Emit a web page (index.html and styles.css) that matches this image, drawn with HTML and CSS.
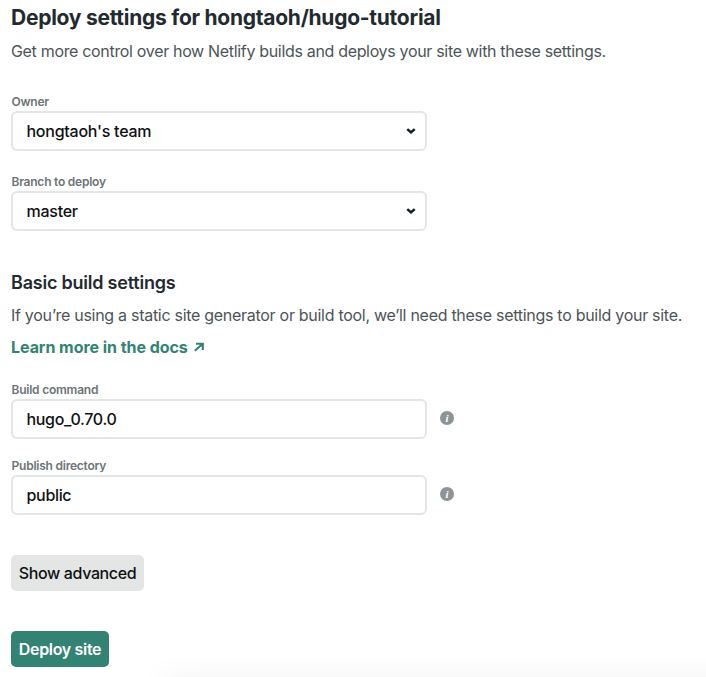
FILE: index.html
```html
<!DOCTYPE html>
<html lang="en">
<head>
<meta charset="utf-8">
<title>Deploy settings</title>
<link rel="stylesheet" href="styles.css">
</head>
<body>
<main class="page">
  <h1 class="title">Deploy settings for hongtaoh/hugo-tutorial</h1>
  <p class="text intro">Get more control over how Netlify builds and deploys your site with these settings.</p>
  <div class="field owner">
    <div class="label">Owner</div>
    <div class="control"><span>hongtaoh's team</span><svg class="chevron" viewBox="0 0 10 8"><path d="M1.3 2.1 5 5.4 8.7 2.1"/></svg></div>
  </div>
  <div class="field branch">
    <div class="label">Branch to deploy</div>
    <div class="control"><span>master</span><svg class="chevron" viewBox="0 0 10 8"><path d="M1.3 2.1 5 5.4 8.7 2.1"/></svg></div>
  </div>
  <h2 class="subtitle">Basic build settings</h2>
  <p class="text build">If you’re using a static site generator or build tool, we’ll need these settings to build your site.</p>
  <a class="docs"><span>Learn more in the docs</span><svg class="arrow" viewBox="0 0 12 12"><path d="M3 2.7H9.8V9M9.8 2.7 1.8 9.8"/></svg></a>
  <div class="field command">
    <div class="label">Build command</div>
    <div class="row"><div class="control entry">hugo_0.70.0</div><span class="info">i</span></div>
  </div>
  <div class="field directory">
    <div class="label">Publish directory</div>
    <div class="row"><div class="control entry">public</div><span class="info">i</span></div>
  </div>
  <button class="button advanced">Show advanced</button>
  <button class="button deploy">Deploy site</button>
  <div class="shade"></div>
</main>
</body>
</html>
```

FILE: styles.css
```css
* { box-sizing: border-box; margin: 0; padding: 0; }
body { background: #fff; font-family: Inter, sans-serif; color: #1f2b2f; }
.page { height: 677px; padding: 5px 11px 0; overflow: hidden; position: relative; }
.title { font-size: 21px; line-height: 26px; font-weight: 650; letter-spacing: -0.26px; white-space: nowrap; }
.text { font-size: 16px; line-height: 24px; letter-spacing: -0.325px; color: #4b5558; white-space: nowrap; }
.intro { margin-top: 8px; }
.field { width: 455px; }
.owner { margin-top: 32px; }
.label { height: 16px; padding-left: 0.5px; font-size: 12px; line-height: 14px; font-weight: 600; letter-spacing: -0.23px; color: #6b7477; }
.control { width: 416px; height: 40px; border: 2px solid #e4e5e5; border-radius: 6px; padding: 0 9px 0 13.5px; display: flex; align-items: center; justify-content: space-between; font-size: 16px; font-weight: 450; letter-spacing: -0.26px; color: #0e1111; }
.entry { letter-spacing: -0.32px; }
.branch { margin-top: 24px; }
.chevron { width: 10px; height: 8px; fill: none; stroke: #0e1e25; stroke-width: 2.5; }
.subtitle { margin-top: 40px; font-size: 18px; line-height: 24px; font-weight: 600; letter-spacing: -0.22px; }
.build { margin-top: 8px; letter-spacing: -0.285px; }
.docs { display: flex; align-items: center; gap: 5px; margin-top: 8px; height: 24px; font-size: 16px; font-weight: 650; letter-spacing: -0.05px; color: #328373; }
.arrow { width: 12px; height: 12px; fill: none; stroke: currentColor; stroke-width: 2.1; }
.command { margin-top: 24px; }
.row { display: flex; align-items: center; gap: 13px; }
.info { width: 14px; height: 14px; margin-bottom: 2px; border-radius: 50%; background: #8c9496; color: #fff; font: italic 700 11px/14px "Liberation Serif", serif; text-align: center; }
.directory { margin-top: 20px; }
.button { display: block; height: 36px; border: 0; border-radius: 5px; font: 500 16px/36px Inter, sans-serif; letter-spacing: -0.36px; white-space: nowrap; }
.advanced { width: 133px; margin-top: 40px; background: #e4e5e5; color: #0e1111; }
.deploy { width: 98px; margin-top: 40px; background: #328373; color: #fff; font-weight: 600; letter-spacing: -0.32px; }
.shade { position: absolute; left: 170px; right: -40px; bottom: -12px; height: 2px; box-shadow: 0 0 30px 6px rgba(0, 0, 0, 0.09); }
```
